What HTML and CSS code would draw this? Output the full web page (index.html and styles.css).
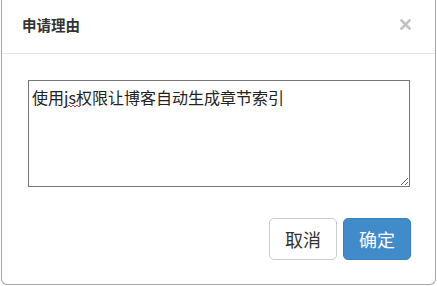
FILE: index.html
```html
<!DOCTYPE html>
<html lang="zh-CN">
<head>
<meta charset="utf-8">
<title>申请理由</title>
<link rel="stylesheet" href="styles.css">
</head>
<body>
<div class="modal">
  <div class="modal-header">
    <h4 class="modal-title">申请理由</h4>
    <button class="close" type="button" aria-label="关闭">
      <svg width="11" height="11" viewBox="0 0 11 11"><path d="M1.5 1.5 L9.5 9.5 M9.5 1.5 L1.5 9.5" stroke="#c2c2c2" stroke-width="2.6" stroke-linecap="square"/></svg>
    </button>
  </div>
  <div class="modal-body">
    <div class="field">
      <textarea class="reason" spellcheck="false">使用js权限让博客自动生成章节索引</textarea>
      <svg class="squiggle" width="14" height="4" viewBox="0 0 14 4"><path d="M0 3 L2 1 L4 3 L6 1 L8 3 L10 1 L12 3 L14 1" fill="none" stroke="#e0303a" stroke-width="1"/></svg>
    </div>
  </div>
  <div class="modal-footer">
    <button class="btn btn-default" type="button">取消</button>
    <button class="btn btn-primary" type="button">确定</button>
  </div>
</div>
</body>
</html>
```
FILE: styles.css
```css
html, body {
  margin: 0;
  padding: 0;
  background: #ffffff;
}
body {
  font-family: "Noto Sans CJK SC", "Liberation Sans", sans-serif;
  color: #333333;
}
.modal {
  box-sizing: border-box;
  margin-left: 1px;
  width: 435px;
  height: 285px;
  border: 1px solid #a6a6a6;
  border-top: none;
  border-radius: 0 0 6px 6px;
  background: #ffffff;
}
.modal-header {
  box-sizing: border-box;
  height: 54px;
  padding: 14px 24px 0 20px;
  border-bottom: 1px solid #e5e5e5;
  display: flex;
  justify-content: space-between;
  align-items: flex-start;
}
.modal-title {
  margin: 0;
  font-size: 14.5px;
  line-height: 21px;
  font-weight: bold;
  color: #333333;
}
.close {
  margin: 5px 0 0 0;
  padding: 0;
  border: 0;
  background: transparent;
  width: 11px;
  height: 11px;
  display: flex;
}
.modal-body {
  padding: 26px 0 0 26px;
}
.field {
  position: relative;
  width: 382px;
  height: 107px;
}
.reason {
  box-sizing: border-box;
  display: block;
  width: 382px;
  height: 107px;
  margin: 0;
  padding: 5px 3px;
  border: 1px solid #767676;
  font-family: "Noto Sans CJK SC", "Liberation Sans", sans-serif;
  font-size: 16px;
  line-height: 22px;
  color: #222222;
  background: #ffffff;
}
.squiggle {
  position: absolute;
  left: 39px;
  top: 24px;
}
.modal-footer {
  padding: 31px 24px 0 0;
  display: flex;
  justify-content: flex-end;
  gap: 6px;
}
.btn {
  box-sizing: border-box;
  height: 42px;
  width: 68px;
  padding: 0;
  border: 1px solid #cccccc;
  border-radius: 5px;
  font-family: "Noto Sans CJK SC", "Liberation Sans", sans-serif;
  font-size: 18px;
  line-height: 24px;
}
.btn-default {
  background: #ffffff;
  color: #333333;
}
.btn-primary {
  background: #428bca;
  border-color: #3c81bd;
  color: #ffffff;
}
```
